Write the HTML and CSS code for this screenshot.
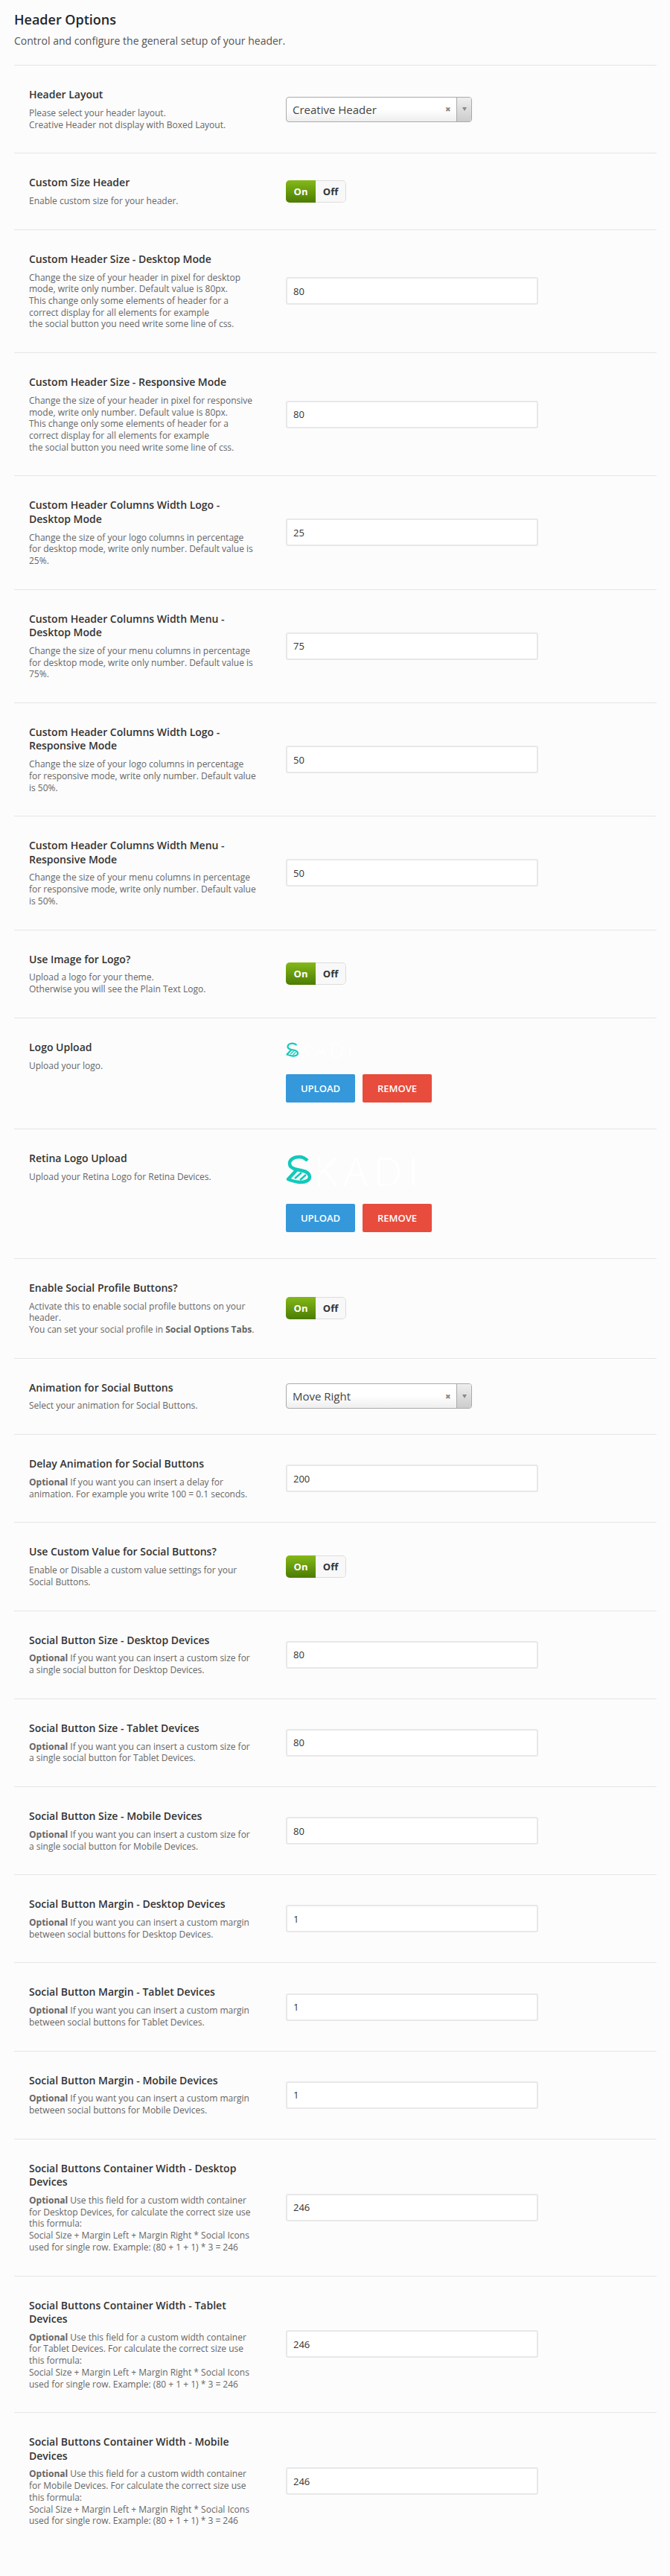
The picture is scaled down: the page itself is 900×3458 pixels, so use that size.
FILE: index.html
```html
<!DOCTYPE html>
<html lang="en">
<head>
<meta charset="utf-8">
<title>Header Options</title>
<link rel="stylesheet" href="styles.css">
</head>
<body>
<main class="panel">
  <header class="panel-head">
    <h1 class="panel-title">Header Options</h1>
    <p class="panel-sub">Control and configure the general setup of your header.</p>
  </header>

  <section class="row">
    <div class="label"><h3>Header Layout</h3><p>Please select your header layout.<br>Creative Header not display with Boxed Layout.</p></div>
    <div class="select"><span class="select-text">Creative Header</span><span class="select-clear">✖</span><span class="select-arrow"><i></i></span></div>
  </section>

  <section class="row">
    <div class="label"><h3>Custom Size Header</h3><p>Enable custom size for your header.</p></div>
    <div class="toggle"><span class="on">On</span><span class="off">Off</span></div>
  </section>

  <section class="row">
    <div class="label"><h3>Custom Header Size - Desktop Mode</h3><p>Change the size of your header in pixel for desktop mode, write only number. Default value is 80px.<br>This change only some elements of header for a<br>correct display for all elements for example<br>the social button you need write some line of css.</p></div>
    <input class="field" type="text" value="80">
  </section>

  <section class="row">
    <div class="label"><h3>Custom Header Size - Responsive Mode</h3><p>Change the size of your header in pixel for responsive mode, write only number. Default value is 80px.<br>This change only some elements of header for a<br>correct display for all elements for example<br>the social button you need write some line of css.</p></div>
    <input class="field" type="text" value="80">
  </section>

  <section class="row">
    <div class="label"><h3>Custom Header Columns Width Logo - Desktop Mode</h3><p>Change the size of your logo columns in percentage for desktop mode, write only number. Default value is 25%.</p></div>
    <input class="field" type="text" value="25">
  </section>

  <section class="row">
    <div class="label"><h3>Custom Header Columns Width Menu - Desktop Mode</h3><p>Change the size of your menu columns in percentage for desktop mode, write only number. Default value is 75%.</p></div>
    <input class="field" type="text" value="75">
  </section>

  <section class="row">
    <div class="label"><h3>Custom Header Columns Width Logo - Responsive Mode</h3><p>Change the size of your logo columns in percentage for responsive mode, write only number. Default value is 50%.</p></div>
    <input class="field" type="text" value="50">
  </section>

  <section class="row">
    <div class="label"><h3>Custom Header Columns Width Menu - Responsive Mode</h3><p>Change the size of your menu columns in percentage for responsive mode, write only number. Default value is 50%.</p></div>
    <input class="field" type="text" value="50">
  </section>

  <section class="row">
    <div class="label"><h3>Use Image for Logo?</h3><p>Upload a logo for your theme.<br>Otherwise you will see the Plain Text Logo.</p></div>
    <div class="toggle"><span class="on">On</span><span class="off">Off</span></div>
  </section>

  <section class="row">
    <div class="label"><h3>Logo Upload</h3><p>Upload your logo.</p></div>
    <div class="upload">
      <svg class="logo logo-small" viewBox="0 0 180 50" role="img" aria-label="Skadi logo">
        <path class="logo-s" d="M29 12C25 8 21 7 18 7C10 7 5 11 5 16C5 21 10 23 15 24L22 25.500C29 27 32 30 32 34C32 38 27 41 20 41C13 41 8 39 3 37L15 24"/>
        <path class="logo-s logo-hatch" d="M12 36L21 28M19 38L27 31"/>
        <text class="logo-word" x="38" y="46" textLength="140">KADI</text>
      </svg>
      <div class="btns"><span class="btn btn-blue">UPLOAD</span><span class="btn btn-red">REMOVE</span></div>
    </div>
  </section>

  <section class="row">
    <div class="label"><h3>Retina Logo Upload</h3><p>Upload your Retina Logo for Retina Devices.</p></div>
    <div class="upload">
      <svg class="logo logo-large" viewBox="0 0 180 50" role="img" aria-label="Skadi logo">
        <path class="logo-s" d="M29 12C25 8 21 7 18 7C10 7 5 11 5 16C5 21 10 23 15 24L22 25.500C29 27 32 30 32 34C32 38 27 41 20 41C13 41 8 39 3 37L15 24"/>
        <path class="logo-s logo-hatch" d="M12 36L21 28M19 38L27 31"/>
        <text class="logo-word" x="38" y="46" textLength="140">KADI</text>
      </svg>
      <div class="btns"><span class="btn btn-blue">UPLOAD</span><span class="btn btn-red">REMOVE</span></div>
    </div>
  </section>

  <section class="row">
    <div class="label"><h3>Enable Social Profile Buttons?</h3><p>Activate this to enable social profile buttons on your header.<br>You can set your social profile in <b>Social Options Tabs</b>.</p></div>
    <div class="toggle"><span class="on">On</span><span class="off">Off</span></div>
  </section>

  <section class="row">
    <div class="label"><h3>Animation for Social Buttons</h3><p>Select your animation for Social Buttons.</p></div>
    <div class="select"><span class="select-text">Move Right</span><span class="select-clear">✖</span><span class="select-arrow"><i></i></span></div>
  </section>

  <section class="row">
    <div class="label"><h3>Delay Animation for Social Buttons</h3><p><b>Optional</b> If you want you can insert a delay for animation. For example you write 100 = 0.1 seconds.</p></div>
    <input class="field" type="text" value="200">
  </section>

  <section class="row">
    <div class="label"><h3>Use Custom Value for Social Buttons?</h3><p>Enable or Disable a custom value settings for your Social Buttons.</p></div>
    <div class="toggle"><span class="on">On</span><span class="off">Off</span></div>
  </section>

  <section class="row">
    <div class="label"><h3>Social Button Size - Desktop Devices</h3><p><b>Optional</b> If you want you can insert a custom size for a single social button for Desktop Devices.</p></div>
    <input class="field" type="text" value="80">
  </section>

  <section class="row">
    <div class="label"><h3>Social Button Size - Tablet Devices</h3><p><b>Optional</b> If you want you can insert a custom size for a single social button for Tablet Devices.</p></div>
    <input class="field" type="text" value="80">
  </section>

  <section class="row">
    <div class="label"><h3>Social Button Size - Mobile Devices</h3><p><b>Optional</b> If you want you can insert a custom size for a single social button for Mobile Devices.</p></div>
    <input class="field" type="text" value="80">
  </section>

  <section class="row">
    <div class="label"><h3>Social Button Margin - Desktop Devices</h3><p><b>Optional</b> If you want you can insert a custom margin between social buttons for Desktop Devices.</p></div>
    <input class="field" type="text" value="1">
  </section>

  <section class="row">
    <div class="label"><h3>Social Button Margin - Tablet Devices</h3><p><b>Optional</b> If you want you can insert a custom margin between social buttons for Tablet Devices.</p></div>
    <input class="field" type="text" value="1">
  </section>

  <section class="row">
    <div class="label"><h3>Social Button Margin - Mobile Devices</h3><p><b>Optional</b> If you want you can insert a custom margin between social buttons for Mobile Devices.</p></div>
    <input class="field" type="text" value="1">
  </section>

  <section class="row">
    <div class="label"><h3>Social Buttons Container Width - Desktop Devices</h3><p><b>Optional</b> Use this field for a custom width container for Desktop Devices, for calculate the correct size use this formula:<br>Social Size + Margin Left + Margin Right * Social Icons used for single row. Example: (80 + 1 + 1) * 3 = 246</p></div>
    <input class="field" type="text" value="246">
  </section>

  <section class="row">
    <div class="label"><h3>Social Buttons Container Width - Tablet Devices</h3><p><b>Optional</b> Use this field for a custom width container for Tablet Devices. For calculate the correct size use this formula:<br>Social Size + Margin Left + Margin Right * Social Icons used for single row. Example: (80 + 1 + 1) * 3 = 246</p></div>
    <input class="field" type="text" value="246">
  </section>

  <section class="row">
    <div class="label"><h3>Social Buttons Container Width - Mobile Devices</h3><p><b>Optional</b> Use this field for a custom width container for Mobile Devices. For calculate the correct size use this formula:<br>Social Size + Margin Left + Margin Right * Social Icons used for single row. Example: (80 + 1 + 1) * 3 = 246</p></div>
    <input class="field" type="text" value="246">
  </section>
</main>
</body>
</html>
```

FILE: styles.css
```css
* { box-sizing: border-box; }
html, body { margin: 0; background: #fcfcfc; }
body { font-family: "Open Sans", "Liberation Sans", sans-serif; color: #333; min-height: 3458px; }

.panel { padding: 0 18px 0 19px; }

.panel-head { height: 88px; border-bottom: 1px solid #e5e5e5; padding-top: 13px; }
.panel-title { margin: 0; font-size: 18px; line-height: 26px; font-weight: 600; color: #23282d; }
.panel-sub { margin: 3px 0 0; font-size: 14px; line-height: 26px; color: #555; }

.row {
  display: flex;
  align-items: center;
  padding: 30px 0 30px 20px;
  border-bottom: 1px solid #e5e5e5;
}
.row:last-child { border-bottom: 0; }

.label { width: 306px; flex: none; margin-right: 39px; align-self: flex-start; }
.label h3 { margin: 0 0 7.400px; font-size: 14px; line-height: 18.400px; font-weight: 600; color: #333; }
.label p { margin: 0; font-size: 12px; line-height: 15.700px; color: #666; }
.label b { font-weight: 700; color: #666; }

.select {
  width: 250px; height: 34px; display: flex; align-items: center;
  border: 1px solid #aaa; border-radius: 4px;
  background: linear-gradient(#fff 50%, #eee);
  font-size: 15px; color: #444;
}
.select-text { flex: 1; padding-left: 8px; }
.select-clear { width: 12px; margin-right: 5px; font-size: 9px; line-height: 1; color: #888; text-align: center; }
.select-arrow {
  width: 20px; align-self: stretch; display: flex; align-items: center; justify-content: center;
  border-left: 1px solid #aaa; border-radius: 0 3px 3px 0;
  background: linear-gradient(#eee, #ccc);
}
.select-arrow i { width: 0; height: 0; border-style: solid; border-width: 5px 3px 0; border-color: #888 transparent transparent; }

.toggle {
  width: 81px; height: 30px; display: flex; border-radius: 5px; overflow: hidden;
  font-size: 13px; font-weight: 700; line-height: 30px; text-align: center;
}
.toggle .on { width: 40px; color: #fff; background: linear-gradient(#84b918, #4b7c04); }
.toggle .off { flex: 1; color: #333; background: #f8f8f8; border: 1px solid #ddd; border-left: 0; border-radius: 0 5px 5px 0; line-height: 28px; }

.field {
  width: 339px; height: 37px; padding: 0 8px;
  border: 2px solid #e8e8e8; border-radius: 3px; background: #fff;
  font: 13px "Open Sans", "Liberation Sans", sans-serif; color: #333; outline: 0;
}

.upload { display: flex; flex-direction: column; }
.logo { display: block; margin-bottom: 20px; overflow: visible; }
.logo-small { width: 90px; height: 25px; }
.logo-large { width: 180px; height: 50px; }
.logo-s { fill: none; stroke: #12c9bb; stroke-width: 4.500; stroke-linecap: butt; stroke-linejoin: round; }
.logo-hatch { stroke-width: 2.500; }
.logo-word { font-family: "Open Sans", sans-serif; font-size: 54px; font-weight: 300; fill: #fff; }

.btns { display: flex; gap: 10px; margin-bottom: 5px; }
.btn { width: 93px; height: 38px; border-radius: 2px; color: #fff; font-size: 13px; font-weight: 600; line-height: 38px; text-align: center; }
.btn-blue { background: #3498db; }
.btn-red { background: #e74c3c; }
```
